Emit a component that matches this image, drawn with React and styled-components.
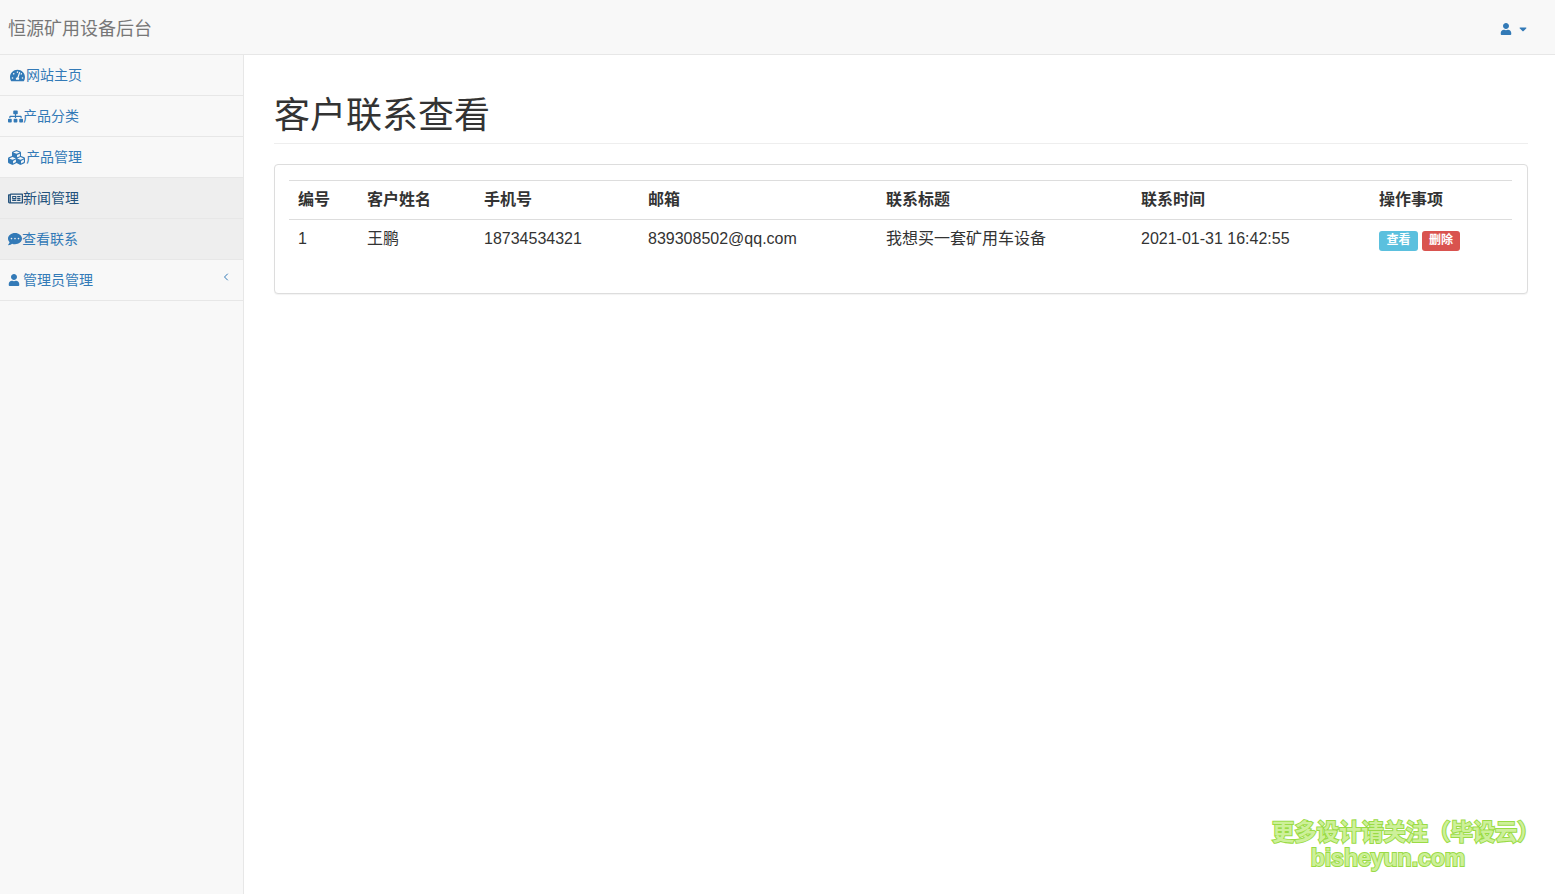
import React from "react";
import styled, { createGlobalStyle } from "styled-components";
import { FaTachometerAlt, FaSitemap, FaCubes, FaRegNewspaper, FaCommentDots, FaUser, FaCaretDown } from "react-icons/fa";
import { FiChevronLeft } from "react-icons/fi";

const Global = createGlobalStyle`
  html, body { margin: 0; padding: 0; height: 100%; background: #fff; }
  body { font-family: "Liberation Sans", "Noto Sans CJK SC", Arial, sans-serif; font-size: 14px; line-height: 20px; color: #333; }
  #root { height: 100%; }
`;
const Page = styled.div`display: flex; flex-direction: column; height: 894px; overflow: hidden; position: relative;`;
const Navbar = styled.header`
  flex: 0 0 54px; display: flex; align-items: center; justify-content: space-between;
  background: #f8f8f8; border-bottom: 1px solid #e7e7e7; padding: 0 26px 0 8px;
`;
const Brand = styled.div`font-size: 18px; color: #777; line-height: 20px; padding-top: 3px;`;
const UserMenu = styled.div`display: flex; align-items: center; gap: 5px; color: #337ab7; padding-top: 3px;`;
const Body = styled.div`flex: 1; display: flex; min-height: 0;`;
const Sidebar = styled.nav`flex: 0 0 243px; background: #f8f8f8; border-right: 1px solid #e7e7e7;`;
const NavItem = styled.a`
  display: flex; align-items: center; height: 40px; border-bottom: 1px solid #e7e7e7;
  padding-left: ${p => p.$pad}px; padding-right: 11px; font-size: 14px;
  color: ${p => (p.$dark ? "#23527c" : "#337ab7")};
  background: ${p => (p.$active ? "#eee" : "transparent")};
  & > svg { flex: none; }
`;
const NavLabel = styled.span`margin-left: ${p => p.$gap || 0}px;`;
const Caret = styled.span`margin-left: auto; display: flex; font-size: 12px; margin-top: -6px;`;
const Main = styled.main`flex: 1; min-width: 0; padding: 0 27px 0 30px;`;
const Heading = styled.h1`
  margin: 40px 0 20px; padding: 1px 0 8px; height: 39px; font-size: 36px; font-weight: 400; line-height: 40px;
  color: #333; border-bottom: 1px solid #eee;
`;
const Panel = styled.section`
  border: 1px solid #ddd; border-radius: 4px; background: #fff; padding: 15px 15px 20px 14px; height: 93px;
  box-shadow: 0 1px 1px rgba(0,0,0,.05);
`;
const Table = styled.table`width: 100%; border-collapse: collapse; table-layout: fixed; border-spacing: 0;`;
const Th = styled.th`
  width: ${p => p.$w}px; box-sizing: border-box; text-align: left; font-weight: 700; padding: 8px 8px 8px 9px;
  border-top: 1px solid #ddd; border-bottom: 1px solid #ddd; height: 39px; line-height: 20px; font-size: 16px;
`;
const Td = styled.td`padding: 9px 8px 7px 9px; line-height: 20px; font-size: 16px; vertical-align: top; height: 20px;`;
const Actions = styled.div`display: flex; gap: 4px; margin-top: 2px;`;
const Label = styled.span`
  display: block; width: ${p => p.$w}px; height: 20px; border-radius: 3px; background: ${p => p.$bg}; color: #fff;
  font-size: 12px; line-height: 18px; font-weight: 700; text-align: center;
`;
const Watermark = styled.div`
  position: absolute; left: 1272px; top: 820px; width: 256px; text-align: center; color: #cdf09a; font-weight: 700;
  -webkit-text-stroke: 2px #9adb45; paint-order: stroke fill;
`;
const MarkLine = styled.div`font-size: ${p => p.$size}px; line-height: ${p => p.$lh}px; white-space: nowrap; margin-left: ${p => p.$ml || 0}px;`;

const nav = [
  { icon: <FaTachometerAlt size={15} />, text: "网站主页", pad: 10, gap: 1 },
  { icon: <FaSitemap size={15} />, text: "产品分类", pad: 8, gap: 0 },
  { icon: <FaCubes size={17} />, text: "产品管理", pad: 8, gap: 1 },
  { icon: <FaRegNewspaper size={15} />, text: "新闻管理", pad: 8, gap: 0, active: true, dark: true },
  { icon: <FaCommentDots size={14} />, text: "查看联系", pad: 8, gap: 0, active: true },
  { icon: <FaUser size={12} />, text: "管理员管理", pad: 8, gap: 3, caret: true },
];
const cols = [["编号", 69], ["客户姓名", 117], ["手机号", 164], ["邮箱", 238], ["联系标题", 255], ["联系时间", 238], ["操作事项", 142]];

export default function App() {
  return (
    <Page>
      <Global />
      <Navbar>
        <Brand>恒源矿用设备后台</Brand>
        <UserMenu><FaUser size={12} /><FaCaretDown size={12} /></UserMenu>
      </Navbar>
      <Body>
        <Sidebar>
          {nav.map(n => (
            <NavItem key={n.text} $pad={n.pad} $active={n.active} $dark={n.dark}>
              {n.icon}
              <NavLabel $gap={n.gap}>{n.text}</NavLabel>
              {n.caret && <Caret><FiChevronLeft /></Caret>}
            </NavItem>
          ))}
        </Sidebar>
        <Main>
          <Heading>客户联系查看</Heading>
          <Panel>
            <Table>
              <thead>
                <tr>{cols.map(([t, w]) => <Th key={t} $w={w}>{t}</Th>)}</tr>
              </thead>
              <tbody>
                <tr>
                  <Td>1</Td>
                  <Td>王鹏</Td>
                  <Td>18734534321</Td>
                  <Td>839308502@qq.com</Td>
                  <Td>我想买一套矿用车设备</Td>
                  <Td>2021-01-31 16:42:55</Td>
                  <Td>
                    <Actions>
                      <Label $w={39} $bg="#5bc0de">查看</Label>
                      <Label $w={38} $bg="#d9534f">删除</Label>
                    </Actions>
                  </Td>
                </tr>
              </tbody>
            </Table>
          </Panel>
        </Main>
      </Body>
      <Watermark>
        <MarkLine $size={22.3} $lh={26}>更多设计请关注（毕设云）</MarkLine>
        <MarkLine $size={23} $lh={24} $ml={-24}>bisheyun.com</MarkLine>
      </Watermark>
    </Page>
  );
}
